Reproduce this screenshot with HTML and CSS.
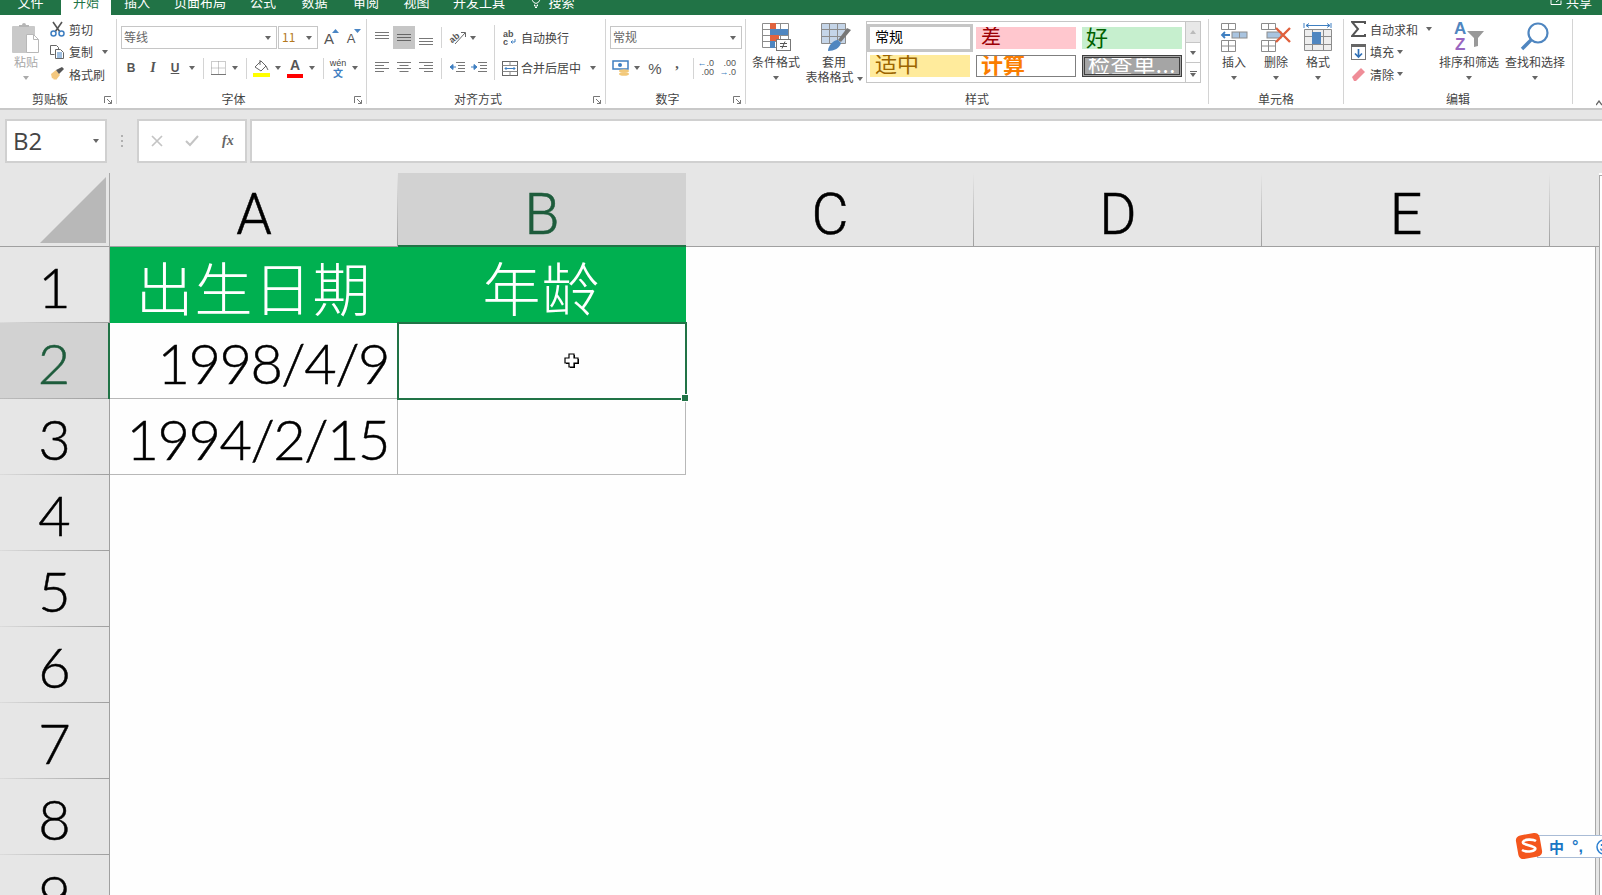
FILE: index.html
```html
<!DOCTYPE html>
<html lang="zh-CN">
<head>
<meta charset="utf-8">
<title>Excel</title>
<link rel="stylesheet" href="styles.css">
</head>
<body>
<div class="app">
  <header class="titlebar">
    <span class="tab w-file">文件</span>
    <span class="tab tab-on">开始</span>
    <span class="tab w-ins">插入</span>
    <span class="tab w-page">页面布局</span>
    <span class="tab w-form">公式</span>
    <span class="tab w-data">数据</span>
    <span class="tab w-rev">审阅</span>
    <span class="tab w-view">视图</span>
    <span class="tab w-dev">开发工具</span>
    <svg class="bulb" width="12" height="8" viewBox="0 0 12 8"><path d="M3 -2 a3.500 3.500 0 1 0 6 0 M4.500 4.500v1.500h3v-1.500M5 7.500h2" fill="none" stroke="#fff"/></svg>
    <span class="tab w-search">搜索</span>
    <span class="spring"></span>
    <svg class="share" width="14" height="8" viewBox="0 0 14 8"><path d="M1 -2v6.500h10v-4M6 2l4-3" fill="none" stroke="#fff"/></svg>
    <span class="tab w-share">共享</span>
  </header>

  <div class="ribbon">
    <section class="group g-clip">
      <div class="gbody">
        <div class="big b-paste">
          <div class="bigicon">
            <svg width="30" height="33" viewBox="0 0 30 33"><rect x="1" y="4" width="23" height="27" rx="1" fill="#c9c9c9"/><path d="M8 5V3h3a2 2 0 0 1 4 0h3v2z" fill="#b5b5b5"/><path d="M15.500 12.500h7l5 5v13h-12z" fill="#fff" stroke="#b8b8b8"/><path d="M22.500 12.500v5h5" fill="none" stroke="#b8b8b8"/></svg>
          </div>
          <span class="btext dim">粘贴</span>
          <span class="bcaret"><i class="caret light"></i></span>
        </div>
        <div class="smallcol">
          <div class="srow">
            <svg class="sicon" width="15" height="16" viewBox="0 0 15 16"><path d="M3 1l7 10M12 1L5 11" stroke="#555" stroke-width="1.600"/><circle cx="3.500" cy="12.500" r="2.500" fill="none" stroke="#3f7fc1" stroke-width="1.500"/><circle cx="11.500" cy="12.500" r="2.500" fill="none" stroke="#3f7fc1" stroke-width="1.500"/></svg>
            <span>剪切</span>
          </div>
          <div class="srow">
            <svg class="sicon" width="15" height="14" viewBox="0 0 15 14"><path d="M.5.500h6l2 2v2M.5.500v9h4" fill="none" stroke="#666"/><path d="M5.500 4.500h5l3 3v6h-8z" fill="#fff" stroke="#666"/><path d="M7 8h5M7 10h5M7 12h5" stroke="#3f7fc1"/></svg>
            <span>复制</span><i class="caret m-copy"></i>
          </div>
          <div class="srow">
            <svg class="sicon" width="15" height="14" viewBox="0 0 15 14"><path d="M1 7l5-4 4 5-4 5-1-1-1 1-1-2-1 .5z" fill="#f4c87f"/><path d="M6 3l3 4 5-5-2-2z" fill="#555"/></svg>
            <span>格式刷</span>
          </div>
        </div>
      </div>
      <div class="glabel"><span>剪贴板</span><svg class="launch" width="8" height="8" viewBox="0 0 8 8"><path d="M.5 7V.5H7M7.500 7.500L3 3M7.500 4v3.500H4" fill="none" stroke="#777"/></svg></div>
    </section>

    <section class="group g-font">
      <div class="gbody col">
        <div class="row">
          <div class="combo c-name"><span class="ctext">等线</span><i class="caret"></i></div>
          <div class="combo c-size"><span class="ctext">11</span><i class="caret"></i></div>
          <span class="cell w-grow">A<svg class="tri" width="7" height="4" viewBox="0 0 7 4"><path d="M0 4l3.500-4 3.500 4z" fill="#4a86c5"/></svg></span>
          <span class="cell w-shrink">A<svg class="tri" width="7" height="4" viewBox="0 0 7 4"><path d="M0 0l3.500 4 3.500-4z" fill="#4a86c5"/></svg></span>
        </div>
        <div class="row r2">
          <b class="cell w20 t-style">B</b>
          <i class="cell w24 t-style t-italic">I</i>
          <u class="cell w20 t-style t-under">U</u>
          <span class="cell w14"><i class="caret"></i></span>
          <span class="sep"></span>
          <span class="cell w20"><svg width="15" height="14" viewBox="0 0 15 14"><path d="M.5.500h14v13H.5zM.5 7h14M7.500.500v13" fill="none" stroke="#999" stroke-dasharray="1 1"/><path d="M0 13.500h15" stroke="#777"/></svg></span>
          <span class="cell w14"><i class="caret"></i></span>
          <span class="sep"></span>
          <span class="cell w20"><svg width="17" height="18" viewBox="0 0 17 18"><path d="M2 8l6-6 5 5-5 5z" fill="#fff" stroke="#666"/><path d="M7 1v5M13 7l2 4" stroke="#666"/><rect x="0" y="14" width="17" height="4" fill="#ffff00"/></svg></span>
          <span class="cell w14"><i class="caret"></i></span>
          <span class="cell w20 colored">A<span class="redbar"></span></span>
          <span class="cell w14"><i class="caret"></i></span>
          <span class="sep"></span>
          <span class="cell w20 wen"><span class="wen1">wén</span><span class="wen2">文</span></span>
          <span class="cell w14"><i class="caret"></i></span>
        </div>
      </div>
      <div class="glabel"><span>字体</span><svg class="launch" width="8" height="8" viewBox="0 0 8 8"><path d="M.5 7V.5H7M7.500 7.500L3 3M7.500 4v3.500H4" fill="none" stroke="#777"/></svg></div>
    </section>

    <section class="group g-align">
      <div class="gbody">
        <div class="col">
          <div class="row">
            <span class="cell w22"><svg width="14" height="14" viewBox="0 0 14 14"><path d="M0 1.500h14M0 4.500h14M0 7.500h14" stroke="#777"/></svg></span>
            <span class="cell w22 pressed"><svg width="14" height="14" viewBox="0 0 14 14"><path d="M0 3.500h14M0 6.500h14M0 9.500h14" stroke="#666"/></svg></span>
            <span class="cell w22"><svg width="14" height="14" viewBox="0 0 14 14"><path d="M0 7.500h14M0 10.500h14M0 13.500h14" stroke="#777"/></svg></span>
            <span class="sep"></span>
            <span class="cell w22"><svg width="17" height="16" viewBox="0 0 17 16"><text x="0" y="11" transform="rotate(-40 5 8)" class="svgtxt">ab</text><path d="M6 14L16 3M12 2.500h4.500V7" fill="none" stroke="#666"/></svg></span>
            <span class="cell w10"><i class="caret"></i></span>
          </div>
          <div class="row r2">
            <span class="cell w22"><svg width="14" height="12" viewBox="0 0 14 12"><path d="M0 .500h14M0 3.500h9M0 6.500h14M0 9.500h9" stroke="#777"/></svg></span>
            <span class="cell w22"><svg width="14" height="12" viewBox="0 0 14 12"><path d="M0 .500h14M2.500 3.500h9M0 6.500h14M2.500 9.500h9" stroke="#777"/></svg></span>
            <span class="cell w22"><svg width="14" height="12" viewBox="0 0 14 12"><path d="M0 .500h14M5 3.500h9M0 6.500h14M5 9.500h9" stroke="#777"/></svg></span>
            <span class="sep"></span>
            <span class="cell w22"><svg width="16" height="12" viewBox="0 0 16 12"><path d="M7 .500h9M9 3.500h7M9 6.500h7M7 9.500h9" stroke="#777"/><path d="M7 5H2M4 2.500L1 5l3 2.500z" stroke="#3f7fc1" fill="#3f7fc1"/></svg></span>
            <span class="cell w22"><svg width="16" height="12" viewBox="0 0 16 12"><path d="M7 .500h9M9 3.500h7M9 6.500h7M7 9.500h9" stroke="#777"/><path d="M0 5h5M3 2.500L6 5 3 7.500z" stroke="#3f7fc1" fill="#3f7fc1"/></svg></span>
          </div>
        </div>
        <span class="sep tall"></span>
        <div class="col">
          <div class="row">
            <span class="cell w21"><svg width="13" height="15" viewBox="0 0 13 15"><text x="0" y="7" class="svgtxt">ab</text><text x="0" y="15" class="svgtxt">c</text><path d="M12 9v3H8M9.500 10.500L8 12l1.500 1.500" fill="none" stroke="#3f7fc1"/></svg></span>
            <span class="stext m-wrap">自动换行</span>
          </div>
          <div class="row r2">
            <span class="cell w21"><svg width="16" height="15" viewBox="0 0 16 15"><rect x=".5" y=".5" width="15" height="14" fill="none" stroke="#666"/><path d="M.5 4.500h15M.5 10.500h15M8 .5v4M8 10.500v4" stroke="#888"/><path d="M3 7.500h10M4.500 6L3 7.500 4.500 9M11.500 6L13 7.500 11.500 9" fill="none" stroke="#3f7fc1"/></svg></span>
            <span class="stext m-merge">合并后居中</span><i class="caret m-mergecaret"></i>
          </div>
        </div>
      </div>
      <div class="glabel"><span>对齐方式</span><svg class="launch" width="8" height="8" viewBox="0 0 8 8"><path d="M.5 7V.5H7M7.500 7.500L3 3M7.500 4v3.500H4" fill="none" stroke="#777"/></svg></div>
    </section>

    <section class="group g-num">
      <div class="gbody col">
        <div class="row">
          <div class="combo c-fmt"><span class="ctext">常规</span><i class="caret"></i></div>
        </div>
        <div class="row r2">
          <span class="cell w22"><svg width="18" height="16" viewBox="0 0 18 16"><rect x="1" y="1" width="15" height="8" fill="#fff" stroke="#3f7fc1" stroke-width="1.500"/><circle cx="8" cy="5" r="2" fill="#3f7fc1"/><ellipse cx="12" cy="11" rx="5" ry="1.800" fill="#f2c879"/><ellipse cx="12" cy="14" rx="5" ry="1.800" fill="#f2c879"/></svg></span>
          <span class="cell w10"><i class="caret"></i></span>
          <span class="cell w26 t-pct">%</span>
          <span class="cell w20 t-comma">,</span>
          <span class="spacer1"></span>
          <span class="sep"></span>
          <span class="cell w22 decs"><span class="d1"><span class="blue">←</span>.0</span><span class="d2">.00</span></span>
          <span class="cell w22 decs"><span class="d2">.00</span><span class="d1"><span class="blue">→</span>.0</span></span>
        </div>
      </div>
      <div class="glabel"><span>数字</span><svg class="launch" width="8" height="8" viewBox="0 0 8 8"><path d="M.5 7V.5H7M7.500 7.500L3 3M7.500 4v3.500H4" fill="none" stroke="#777"/></svg></div>
    </section>

    <section class="group g-style">
      <div class="gbody">
        <div class="big b-cond">
          <div class="bigicon">
            <svg width="30" height="30" viewBox="0 0 30 30"><path d="M1.500 1.500h26v24h-26zM1.500 7.500h26M1.500 13.500h26M1.500 19.500h26M9.500 1.500v24M19.500 1.500v24" fill="none" stroke="#8c8c8c"/><rect x="9" y="1" width="6" height="6" fill="#e0633f"/><rect x="9" y="7" width="18" height="6" fill="#4f86c0"/><rect x="9" y="13" width="9" height="6" fill="#e0633f"/><rect x="9" y="19" width="5" height="7" fill="#4f86c0"/><rect x="15.500" y="17.500" width="14" height="11" fill="#fff" stroke="#777"/><path d="M19 21.500h7M19 24.500h7M24 19.500l-3 7" stroke="#555" fill="none"/></svg>
          </div>
          <span class="btext">条件格式</span>
          <span class="bcaret"><i class="caret"></i></span>
        </div>
        <div class="big b-table">
          <div class="bigicon icon-shift">
            <svg width="32" height="30" viewBox="0 0 32 30"><rect x="1.500" y="1.500" width="24" height="20" fill="#c5d5e8"/><path d="M1.500 1.500h24v20h-24zM1.500 7.500h24M1.500 14.500h24M9.500 1.500v20M17.500 1.500v20" fill="none" stroke="#8c8c8c"/><path d="M31 8L21 20l-3-2 9-12z" fill="#777"/><path d="M8 29c0-5 5-11 10-11l3 3c-1 5-7 8-13 8z" fill="#4f86c0"/></svg>
          </div>
          <span class="btext">套用</span>
          <span class="btext nowrap">表格格式<i class="caret m-tbl"></i></span>
        </div>
        <div class="gallery">
          <div class="swatches">
            <span class="sw sw-normal">常规</span>
            <span class="sw sw-bad">差</span>
            <span class="sw sw-good">好</span>
            <span class="sw sw-mid">适中</span>
            <span class="sw sw-calc">计算</span>
            <span class="sw sw-check">检查单...</span>
          </div>
          <div class="gscroll">
            <span class="gbtn"><i class="caret up light"></i></span>
            <span class="gbtn"><i class="caret"></i></span>
            <span class="gbtn more"><i class="morebar"></i><i class="caret"></i></span>
          </div>
        </div>
      </div>
      <div class="glabel plain"><span>样式</span></div>
    </section>

    <section class="group g-cells">
      <div class="gbody">
        <div class="big b-cell">
          <div class="bigicon">
            <svg width="28" height="30" viewBox="0 0 28 30"><path d="M1.500 1.500h14v6h-14zM8.500 1.500v6M1.500 18.500h14v11h-14zM1.500 24h14M8.500 18.500v11" fill="none" stroke="#8c8c8c"/><rect x="12" y="10" width="15" height="6" fill="#a9c4e0" stroke="#8c8c8c"/><path d="M19.500 10v6" stroke="#8c8c8c"/><path d="M10 13H2M5 10l-3 3 3 3" fill="none" stroke="#3f7fc1" stroke-width="1.800"/></svg>
          </div>
          <span class="btext">插入</span>
          <span class="bcaret"><i class="caret"></i></span>
        </div>
        <div class="big b-cell">
          <div class="bigicon">
            <svg width="32" height="30" viewBox="0 0 32 30"><path d="M1.500 1.500h14v6h-14zM8.500 1.500v6M1.500 18.500h14v11h-14zM1.500 24h14M8.500 18.500v11" fill="none" stroke="#8c8c8c"/><rect x="7" y="10" width="14" height="6" fill="#a9c4e0" stroke="#8c8c8c"/><path d="M16 6l14 14M30 6L16 20" stroke="#e0603c" stroke-width="2.400"/></svg>
          </div>
          <span class="btext">删除</span>
          <span class="bcaret"><i class="caret"></i></span>
        </div>
        <div class="big b-cell">
          <div class="bigicon">
            <svg width="30" height="31" viewBox="0 0 30 31"><path d="M1 1v5M28 1v5M3 3.500h24M3 3.500l3-2M3 3.500l3 2M27 3.500l-3-2M27 3.500l-3 2" fill="none" stroke="#3f7fc1"/><path d="M1.500 7.500h27v21h-27zM1.500 14.500h27M1.500 22.500h27M9.500 7.500v21M20.500 7.500v21" fill="#eee" stroke="#8c8c8c"/><rect x="9" y="10" width="9" height="12" fill="#4f86c0"/></svg>
          </div>
          <span class="btext">格式</span>
          <span class="bcaret"><i class="caret"></i></span>
        </div>
      </div>
      <div class="glabel plain"><span>单元格</span></div>
    </section>

    <section class="group g-edit">
      <div class="gbody">
        <div class="smallcol wide">
          <div class="srow">
            <svg class="sicon" width="15" height="16" viewBox="0 0 15 16"><path d="M14 3V1H1l6 7-6 7h13v-2" fill="none" stroke="#555" stroke-width="2"/></svg>
            <span>自动求和</span><i class="caret m-sum"></i>
          </div>
          <div class="srow">
            <svg class="sicon" width="15" height="16" viewBox="0 0 15 16"><rect x=".5" y=".5" width="14" height="15" fill="#fff" stroke="#777"/><rect x="0" y="0" width="15" height="3" fill="#666"/><path d="M7.500 5v8M4 9.500l3.500 3.500 3.500-3.500" fill="none" stroke="#2f6fb5" stroke-width="1.700"/></svg>
            <span>填充</span><i class="caret m-fill"></i>
          </div>
          <div class="srow">
            <svg class="sicon" width="15" height="14" viewBox="0 0 15 14"><path d="M1 10l9-9 4 4-9 9H3z" fill="#ef8d98"/></svg>
            <span>清除</span><i class="caret m-fill"></i>
          </div>
        </div>
        <div class="big b-sort">
          <div class="bigicon">
            <svg width="31" height="30" viewBox="0 0 31 30"><text x="0" y="12" class="az a">A</text><text x="1" y="28" class="az z">Z</text><path d="M13 9h17l-6 7v8l-4 1v-9z" fill="#999"/></svg>
          </div>
          <span class="btext">排序和筛选</span>
          <span class="bcaret"><i class="caret"></i></span>
        </div>
        <div class="big b-find">
          <div class="bigicon">
            <svg width="30" height="30" viewBox="0 0 30 30"><circle cx="18" cy="11" r="9.500" fill="none" stroke="#4f86c0" stroke-width="2.200"/><path d="M11 18L2 27" stroke="#4f86c0" stroke-width="3.400"/></svg>
          </div>
          <span class="btext">查找和选择</span>
          <span class="bcaret"><i class="caret"></i></span>
        </div>
      </div>
      <div class="glabel plain"><span>编辑</span></div>
    </section>
    <div class="collapse"><svg width="6" height="6" viewBox="0 0 6 6"><path d="M0 5l3-4 3 4" fill="none" stroke="#666" stroke-width="1.300"/></svg></div>
  </div>

  <div class="formulabar">
    <div class="namebox"><span>B2</span><i class="caret"></i></div>
    <div class="dots"><i></i><i></i><i></i></div>
    <div class="fxbox">
      <svg width="12" height="12" viewBox="0 0 12 12"><path d="M1 1l10 10M11 1L1 11" stroke="#c4c4c4" stroke-width="1.700"/></svg>
      <svg width="14" height="12" viewBox="0 0 14 12"><path d="M1 6l4 4 8-9" fill="none" stroke="#c4c4c4" stroke-width="2"/></svg>
      <span class="fx">fx</span>
    </div>
    <div class="formula"></div>
  </div>

  <main class="sheet">
    <div class="corner"><svg width="66" height="66" viewBox="0 0 66 66"><path d="M66 0v66H0z" fill="#b8b8b8"/></svg></div>
    <div class="ch">A</div>
    <div class="ch ch-on">B</div>
    <div class="ch">C</div>
    <div class="ch">D</div>
    <div class="ch">E</div>
    <div class="ch-rest"></div>
    <div class="vscroll-track"></div>
    <div class="vscroll"></div>

    <div class="rh">1</div>
    <div class="cell-xl head">出生日期</div>
    <div class="cell-xl head">年龄</div>

    <div class="rh rh-on">2</div>
    <div class="cell-xl date">1998/4/9</div>
    <div class="cell-xl active"><i class="handle"></i></div>

    <div class="rh">3</div>
    <div class="cell-xl date">1994/2/15</div>
    <div class="cell-xl"></div>

    <div class="rh">4</div>
    <div class="rh">5</div>
    <div class="rh">6</div>
    <div class="rh">7</div>
    <div class="rh">8</div>
    <div class="rh">9</div>
  </main>

  <svg class="cursor" width="17" height="17" viewBox="0 0 17 17"><path d="M6 2h5v4h4v5h-4v4H6v-4H2V6h4z" fill="#000" transform="translate(1 1)"/><path d="M6 2h5v4h4v5h-4v4H6v-4H2V6h4z" fill="#fff" stroke="#000" stroke-width="1.200"/></svg>

  <div class="ime">
    <svg class="ime-logo" width="30" height="30" viewBox="0 0 30 30"><rect x="3" y="3" width="24" height="24" rx="5" fill="#f4561d" transform="rotate(-10 15 15)"/><path d="M22 10c-3-2-12-2-13 1s10 3 12 6-8 5-13 2" fill="none" stroke="#fff" stroke-width="2.600"/></svg>
    <span class="ime-zh">中</span>
    <span class="ime-punct">°,</span>
    <svg class="ime-smile" width="16" height="16" viewBox="0 0 16 16"><circle cx="8" cy="8" r="7" fill="none" stroke="#2a7fd0" stroke-width="1.500"/><path d="M4.500 9.500c1 3 6 3 7 0M5.500 5v2M10.500 5v2" fill="none" stroke="#2a7fd0" stroke-width="1.300"/></svg>
  </div>
</div>
</body>
</html>
```
FILE: styles.css
```css
* { box-sizing: border-box; }
html, body { margin: 0; padding: 0; }
body { width: 1602px; height: 895px; overflow: hidden; background: #fff; font-family: "Noto Sans CJK SC", "Liberation Sans", sans-serif; }
.app { position: relative; width: 1602px; height: 895px; overflow: hidden; display: flex; flex-direction: column; }
i { font-style: normal; }

/* title bar */
.titlebar { flex: none; height: 15px; background: #217346; display: flex; align-items: flex-start; overflow: hidden; color: #fff; font-size: 13px; }
.tab { flex: none; height: 15px; line-height: 4px; text-align: center; }
.tab-on { width: 50px; background: #fff; color: #217346; }
.w-file { width: 61px; }
.w-ins { width: 52px; }
.w-page { width: 74px; }
.w-form { width: 52px; }
.w-data { width: 51px; }
.w-rev { width: 52px; }
.w-view { width: 49px; }
.w-dev { width: 76px; }
.bulb { flex: none; margin-left: 13px; }
.w-search { width: 39px; }
.spring { flex: 1; }
.share { flex: none; margin-right: -6px; }
.w-share { width: 42px; margin-right: 2px; }

/* ribbon */
.ribbon { flex: none; height: 95px; background: #fff; border-bottom: 2px solid #c8c8c8; display: flex; color: #444; font-size: 12px; line-height: 15px; }
.group { flex: none; margin-top: 4px; height: 85px; border-right: 1px solid #d4d4d4; display: flex; flex-direction: column; }
.g-clip { width: 117px; }
.g-font { width: 250px; }
.g-align { width: 239px; }
.g-num { width: 140px; }
.g-style { width: 463px; }
.g-cells { width: 135px; }
.g-edit { width: 229px; }
.collapse { flex: 1; display: flex; justify-content: flex-end; align-items: flex-end; padding-bottom: 2px; }
.gbody { height: 73px; display: flex; padding-left: 4px; }
.gbody.col, .col { flex-direction: column; padding-top: 7px; display: flex; }
.glabel { height: 12px; line-height: 14px; display: flex; align-items: flex-start; color: #444; }
.glabel span { flex: 1; text-align: center; }
.launch { flex: none; margin: 4px 4px 0 4px; }

.big { flex: none; display: flex; flex-direction: column; align-items: center; }
.bigicon { height: 32px; margin-top: 3px; display: flex; align-items: flex-start; justify-content: center; }
.icon-shift { margin-left: 4px; }
.btext { line-height: 15px; white-space: nowrap; }
.bcaret { height: 15px; margin-top: 1px; display: flex; align-items: center; }
.dim { color: #a8a8a8; }
.caret { display: inline-block; flex: none; width: 0; height: 0; border-left: 3.5px solid transparent; border-right: 3.5px solid transparent; border-top: 4px solid #666; }
.caret.light { border-top-color: #aaa; }
.caret.up { border-top: 0; border-bottom: 4px solid #bbb; }

.g-clip .gbody { padding-left: 6px; }
.b-paste { width: 40px; }
.smallcol { flex: none; margin: -1px 0 0 4px; display: grid; grid-auto-rows: 22.5px; }
.srow { display: flex; align-items: center; }
.sicon { flex: none; margin-right: 4px; }
.m-copy { margin-left: 9px; }

.row { display: flex; align-items: center; height: 23px; }
.r2 { height: 22px; margin-top: 8px; }
.cell { flex: none; display: flex; align-items: center; justify-content: center; height: 100%; position: relative; }
.w10 { width: 10px; }
.w14 { width: 14px; }
.w20 { width: 20px; }
.w21 { width: 21px; }
.w22 { width: 22px; }
.w24 { width: 24px; }
.w26 { width: 26px; }
.sep { flex: none; width: 1px; height: 21px; margin: 0 4px; background: #d4d4d4; }
.combo { flex: none; height: 23px; border: 1px solid #c6c6c6; display: flex; align-items: center; justify-content: space-between; padding: 0 5px 0 2px; margin-right: 1px; }
.ctext { color: #666; line-height: 18px; margin-bottom: 2px; }
.c-name { width: 156px; }
.c-size { width: 40px; padding-left: 3px; }
.c-size .ctext { color: #b5791e; }
.c-fmt { width: 132px; }
.w-grow { width: 22px; margin-left: -1px; font: 15px/1 "Liberation Sans", sans-serif; align-items: flex-end; padding-bottom: 3px; color: #555; }
.w-shrink { width: 22px; font: 13px/1 "Liberation Sans", sans-serif; align-items: flex-end; padding-bottom: 4px; color: #555; }
.tri { position: absolute; right: 1px; top: 3px; }
.t-style { font: bold 12px/1 "Liberation Sans", sans-serif; color: #555; text-decoration: none; }
.t-italic { font-family: "Liberation Serif", serif; font-style: italic; font-size: 14px; }
.t-under { text-decoration: underline; }
.colored { font: bold 14px/1 "Liberation Sans", sans-serif; color: #555; padding-bottom: 6px; }
.redbar { position: absolute; left: 2px; right: 2px; bottom: 1px; height: 4px; background: #f00; }
.wen { flex-direction: column; line-height: 10px; }
.wen1 { font: 9px/10px "Liberation Sans", sans-serif; }
.wen2 { font-size: 10px; line-height: 10px; color: #3f7fc1; font-weight: bold; }
.svgtxt { font: 9px "Liberation Sans", sans-serif; fill: #555; font-weight: bold; }
.pressed { background: #c6c6c6; height: 23px; }
.tall { height: 55px; margin-top: 6px; }
.stext { flex: none; white-space: nowrap; color: #444; margin-bottom: 1px; }
.m-wrap { margin-left: 1px; }
.m-merge { margin-left: 1px; }
.m-mergecaret { margin-left: 9px; }
.t-pct { font: 15px/1 "Liberation Sans", sans-serif; color: #555; }
.t-comma { font: bold 14px/1 "Liberation Serif", serif; color: #555; padding: 0 2px 8px 0; }
.spacer1 { flex: none; width: 1px; }
.decs { flex-direction: column; font: 9px/9px "Liberation Sans", sans-serif; color: #555; align-items: flex-end; padding-right: 6px; }
.blue { color: #3f7fc1; }

.g-style .gbody { padding-left: 0; }
.b-cond { width: 60px; }
.b-table { width: 56px; }
.m-tbl { margin-left: 3px; vertical-align: middle; }
.gallery { flex: none; margin: 2px 0 0 4px; height: 62px; display: flex; }
.swatches { width: 320px; height: 62px; border: 1px solid #c6c6c6; padding: 5px 0 0 3px; display: grid; grid-template-columns: repeat(3, 100px); grid-auto-rows: 22px; column-gap: 6px; row-gap: 6px; }
.sw { display: block; height: 22px; overflow: hidden; padding-left: 5px; white-space: nowrap; font-size: 22px; line-height: 14px; }
.sw-normal { font-size: 14px; line-height: 18px; color: #000; background: #fff; outline: 3px solid #c6c6c6; }
.sw-bad { background: #ffc7ce; color: #9c0006; font-size: 20px; line-height: 18px; }
.sw-good { background: #c6efce; color: #006100; padding-left: 4px; line-height: 18px; }
.sw-mid { background: #ffeb9c; color: #9c6500; }
.sw-calc { background: #fff; color: #fa7d00; font-weight: bold; border: 1px solid #7f7f7f; padding-left: 4px; line-height: 15px; }
.sw-check { background: #a5a5a5; color: #fff; border: 3px double #3f3f3f; padding-left: 3px; line-height: 10px; letter-spacing: .6px; }
.gscroll { width: 15px; height: 62px; display: grid; grid-template-rows: 21px 20px 21px; border: 1px solid #c6c6c6; border-left: 0; }
.gbtn { display: flex; flex-direction: column; gap: 1px; align-items: center; justify-content: center; border-bottom: 1px solid #c6c6c6; }
.gbtn:first-child { background: #e8e8e8; }
.gbtn.more { border-bottom: 0; }
.morebar { width: 7px; height: 1px; background: #666; }

.g-cells .gbody { padding-left: 4px; }
.b-cell { width: 42px; }
.g-edit .gbody { padding-left: 7px; }
.wide { width: 88px; margin-left: 0; }
.m-sum { margin-left: 8px; }
.m-fill { margin-left: 3px; }
.b-sort { width: 60px; }
.b-find { width: 64px; margin-left: 4px; }
.az { font: bold 17px "Liberation Sans", sans-serif; }
.a { fill: #4f86c0; }
.z { fill: #9966c0; }

/* formula bar */
.formulabar { flex: none; height: 63px; background: #e6e6e6; padding: 9px 0 10px 5px; display: flex; }
.namebox { flex: none; width: 102px; height: 44px; background: #fff; border: 2px solid #d0d0d0; display: flex; align-items: center; justify-content: space-between; padding: 0 6px; color: #444; font: 24px/1 "Open Sans", sans-serif; }
.dots { flex: none; width: 30px; display: flex; flex-direction: column; align-items: center; justify-content: center; gap: 3px; }
.dots i { width: 2px; height: 2px; background: #b0b0b0; }
.fxbox { flex: none; width: 110px; height: 44px; background: #fff; border: 2px solid #d0d0d0; display: flex; align-items: center; padding-left: 12px; gap: 22px; }
.fx { font: italic bold 14px/1 "Liberation Serif", serif; color: #666; margin-left: 1px; }
.formula { flex: 1; height: 44px; margin-left: 3px; background: #fff; border: 2px solid #d0d0d0; border-right: 0; }

/* sheet */
.sheet { flex: 1; background: #fefefe; display: grid; grid-template-columns: 110px repeat(5, 288px) 45px 4px 3px; grid-template-rows: 74px repeat(9, 76px); overflow: hidden; color: #000; font: 300 56px/1 Lato, "Noto Sans CJK SC", sans-serif; -webkit-text-stroke: .5px currentColor; }
.corner { background: #e6e6e6; display: flex; align-items: flex-end; justify-content: flex-end; padding: 0 3px 3px 0; border-right: 1px solid #a8a8a8; border-bottom: 1px solid #a0a0a0; }
.ch { display: flex; align-items: center; justify-content: center; padding-top: 10px; font-family: Roboto, sans-serif; font-weight: 300; font-size: 57px; border-bottom: 1px solid #a0a0a0; background: linear-gradient(#e6e6e6, #a0a0a0) right / 1px 100% no-repeat, #e6e6e6; }
.ch-on { background: #d2d2d2; border-bottom: 2px solid #217346; color: #1e5c3c; }
.ch-rest { grid-column: 7 / span 2; background: #e6e6e6; border-bottom: 1px solid #a0a0a0; }
.vscroll-track { grid-column: 8; grid-row: 2 / -1; background: #e6e6e6; border-left: 1px solid #a8a8a8; }
.vscroll { grid-column: 9; grid-row: 1 / -1; margin-top: 2px; border-left: 1px solid #a8a8a8; border-top: 1px solid #a8a8a8; background: #fff; }
.rh { grid-column: 1; display: flex; align-items: center; justify-content: center; padding-top: 4px; border-right: 1px solid #a0a0a0; background: linear-gradient(to right, #dcdcdc, #a0a0a0) bottom / 100% 1px no-repeat, #e6e6e6; }
.rh-on { background: linear-gradient(to right, #bcbcbc, #a0a0a0) bottom / 100% 1px no-repeat, #d2d2d2; border-right: 2px solid #217346; color: #1e5c3c; }
.cell-xl { display: flex; align-items: center; justify-content: center; position: relative; border-right: 1px solid #b8b8b8; border-bottom: 1px solid #b8b8b8; }
.head { background: #00b050; color: #fff; border-color: #00b050; padding-top: 3px; font-family: "Noto Sans CJK SC", sans-serif; font-size: 58px; letter-spacing: 1px; -webkit-text-stroke: 0; }
.date { justify-content: flex-end; padding: 4px 8px 0 0; letter-spacing: -1.5px; }
.active { outline: 2px solid #217346; outline-offset: -1px; z-index: 2; }
.handle { position: absolute; right: -3px; bottom: -3px; width: 6px; height: 6px; background: #217346; border: 1px solid #fff; box-sizing: content-box; margin: -1px; }

/* overlays */
.cursor { position: absolute; left: 563px; top: 352px; }
.ime { position: absolute; left: 1537px; top: 835px; width: 65px; height: 23px; background: #fff; border: 1px solid #a9bcd6; border-right: 0; display: flex; align-items: center; color: #1a76c4; -webkit-text-stroke: 0; }
.ime-logo { position: absolute; left: -24px; top: -5px; }
.ime-zh { margin-left: 11px; font-size: 15px; font-weight: bold; line-height: 20px; }
.ime-punct { margin-left: 8px; font: bold 16px/16px "Liberation Sans", sans-serif; }
.ime-smile { flex: none; margin-left: 13px; }
```
